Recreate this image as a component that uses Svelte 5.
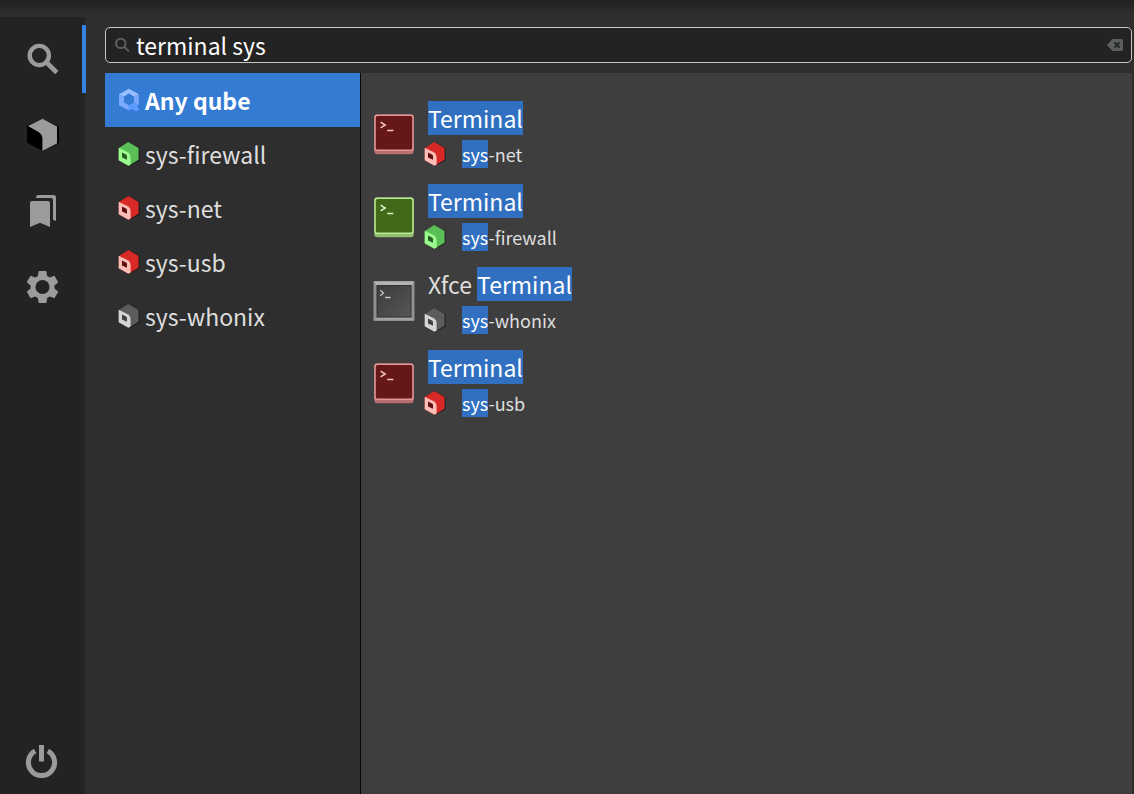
<script>
  let query = $state('terminal sys');
  let activeTab = $state('search');
  let selected = $state('Any qube');

  const tabs = [
    { id: 'search', label: 'Search' },
    { id: 'qubes', label: 'Applications' },
    { id: 'favorites', label: 'Favorites' },
    { id: 'settings', label: 'Settings' }
  ];

  const qubes = [
    { name: 'Any qube', color: 'any' },
    { name: 'sys-firewall', color: 'green' },
    { name: 'sys-net', color: 'red' },
    { name: 'sys-usb', color: 'red' },
    { name: 'sys-whonix', color: 'gray' }
  ];

  const results = [
    { prefix: '', match: 'Terminal', rest: '-net', color: 'red' },
    { prefix: '', match: 'Terminal', rest: '-firewall', color: 'green' },
    { prefix: 'Xfce ', match: 'Terminal', rest: '-whonix', color: 'gray' },
    { prefix: '', match: 'Terminal', rest: '-usb', color: 'red' }
  ];

  const cube = {
    red: { body: '#d72a27', face: '#fbbdb6', hole: '#5e0f10' },
    green: { body: '#59bf56', face: '#9bfb8e', hole: '#275c25' },
    gray: { body: '#5c5c5c', face: '#d6d6d6', hole: '#414141' }
  };

  const term = {
    red: { edge: '#e39797', lip: '#b86f70', fill: '#661818', ink: '#f4c4c2' },
    green: { edge: '#b9e894', lip: '#94bd73', fill: '#42681a', ink: '#dcf5c6' }
  };
</script>

{#snippet cubeIcon(color)}
  <svg class="cube" viewBox="0 0 22 24" aria-hidden="true">
    <path d="M11 .2 21.6 6v12.4L11 24 .2 18V6z" fill="#000" opacity=".5" />
    <path d="M10.3 0 20.6 6v11.8L10.5 23.8.8 18.2V6z" fill={cube[color].body} />
    <path d="M.6 5.8 9.8 10.2Q12.6 11.8 12.6 14.8V22.6L10.5 23.8.6 18.2z" fill={cube[color].face} />
    <path d="M4 10.6 8 12.4Q9 13 9 14V17.8L4 15.4z" fill={cube[color].hole} />
  </svg>
{/snippet}

{#snippet terminalIcon(color)}
  <svg class="app-icon" viewBox="0 0 42 42" aria-hidden="true">
    {#if color === 'gray'}
      <defs>
        <linearGradient id="gray-screen" x1="0" y1="0" x2="1" y2="1">
          <stop offset="0" stop-color="#3c3c3c" />
          <stop offset="1" stop-color="#565656" />
        </linearGradient>
      </defs>
      <rect x="0.5" y="1" width="41" height="40" rx="1" fill="#909090" />
      <path d="M1 1.5H41L39 5H3z" fill="#b4b4b4" />
      <path d="M1 40 3 38H39L41 40z" fill="#a2a2a2" />
      <rect x="3.5" y="5" width="35" height="32.5" fill="#333" />
      <rect x="4.5" y="6" width="33" height="30.5" fill="url(#gray-screen)" />
      <path d="M7.2 10.2 10.6 13 7.2 15.8M12 17.5H17.5" fill="none" stroke="#c4c4c4" stroke-width="1.3" />
    {:else}
      <rect x="1.3" y="0.6" width="39.4" height="39.7" rx="3" fill={term[color].lip} />
      <rect x="1.3" y="0.6" width="39.4" height="36.3" rx="2.5" fill={term[color].edge} />
      <rect x="2.8" y="2" width="36.4" height="33.4" rx="1.5" fill={term[color].fill} />
      <path d="M7.6 8.2 12.2 11 7.6 13.8M14.2 16.6H20.4" fill="none" stroke={term[color].ink} stroke-width="1.5" />
    {/if}
  </svg>
{/snippet}

<div class="menu">
  <div class="titlebar"></div>
  <nav class="sidebar" aria-label="Pages">
    {#each tabs as tab}
      <button
        class="tab"
        class:active={activeTab === tab.id}
        aria-label={tab.label}
        onclick={() => (activeTab = tab.id)}
      >
        <svg class="tab-icon" viewBox="0 0 35 36" aria-hidden="true">
          {#if tab.id === 'search'}
            <circle cx="14.3" cy="14.5" r="9.6" fill="none" stroke="#9b9b9b" stroke-width="4.4" />
            <path d="M20.8 20.6 31.8 31.6" stroke="#9b9b9b" stroke-width="4.8" />
          {:else if tab.id === 'qubes'}
            <path d="M17.8 1.8 33.8 9.5V26.5L18 34.2 2 25.8V8.8z" fill="#000" />
            <path d="M17.6 1.8 32 9.4V26.6L17.4 34V20.5Q17 17.6 14 15.2L3 9z" fill="#9b9b9b" />
          {:else if tab.id === 'favorites'}
            <path d="M7 8H23Q25 8 25 10V34L15 29.7 5 34V10Q5 8 7 8z" fill="#9b9b9b" />
            <path d="M11 4.4Q11 2 13.4 2H28.5Q31 2 31 4.5V28L28 26.8V7Q28 5 26 5H11z" fill="#9b9b9b" />
          {:else}
            <g transform="translate(-1.7 -1.2) scale(1.6)">
              <path
                fill="#9b9b9b"
                d="M19.43 12.98c.04-.32.07-.64.07-.98s-.03-.66-.07-.98l2.11-1.65c.19-.15.24-.42.12-.64l-2-3.46c-.12-.22-.39-.3-.61-.22l-2.49 1c-.52-.4-1.08-.73-1.69-.98l-.38-2.65C14.46 2.18 14.25 2 14 2h-4c-.25 0-.46.18-.49.42l-.38 2.65c-.61.25-1.17.59-1.69.98l-2.49-1c-.23-.09-.49 0-.61.22l-2 3.46c-.13.22-.07.49.12.64l2.11 1.65c-.04.32-.07.65-.07.98s.03.66.07.98l-2.11 1.65c-.19.15-.24.42-.12.64l2 3.46c.12.22.39.3.61.22l2.49-1c.52.4 1.08.73 1.69.98l.38 2.65c.03.24.24.42.49.42h4c.25 0 .46-.18.49-.42l.38-2.65c.61-.25 1.17-.59 1.69-.98l2.49 1c.23.09.49 0 .61-.22l2-3.46c.12-.22.07-.49-.12-.64l-2.11-1.65z"
              />
              <circle cx="12" cy="12" r="4.4" fill="#232323" />
            </g>
          {/if}
        </svg>
      </button>
    {/each}
    <button class="power" aria-label="Power">
      <svg class="tab-icon" viewBox="0 0 35 36" aria-hidden="true">
        <path d="M10.2 7A13.1 13.1 0 1 0 22.8 7" fill="none" stroke="#9b9b9b" stroke-width="5" />
        <path d="M16.5 1V17.5" stroke="#9b9b9b" stroke-width="5" />
      </svg>
    </button>
  </nav>

  <main class="page">
    <div class="search">
      <svg class="search-icon" viewBox="0 0 16 16" aria-hidden="true">
        <circle cx="5.8" cy="6.4" r="4.7" fill="none" stroke="#5b605f" stroke-width="2" />
        <path d="M9.2 9.8 14 14.4" stroke="#5b605f" stroke-width="2" />
      </svg>
      <input type="text" aria-label="Search" bind:value={query} />
      <button class="clear" aria-label="Clear" onclick={() => (query = '')}>
        <svg viewBox="0 0 16 12" aria-hidden="true">
          <path d="M0 6 5.5 0H14.5Q16 0 16 1.5V10.5Q16 12 14.5 12H5.5z" fill="#5b605f" />
          <path d="M7.4 3.4 12.6 8.6M12.6 3.4 7.4 8.6" stroke="#232323" stroke-width="2" />
        </svg>
      </button>
    </div>

    <div class="panes">
      <ul class="qubes">
        {#each qubes as qube}
          <li>
            <button
              class="qube"
              class:selected={selected === qube.name}
              onclick={() => (selected = qube.name)}
            >
              {#if qube.color === 'any'}
                <svg class="cube" viewBox="0 0 22 24" aria-hidden="true">
                  <path d="M1 6.2 10.8 .8 20.8 6.2 15.9 8.6 10.8 5.6 5.9 8.6z" fill="#99bfff" />
                  <path d="M1 6.2 5.9 8.6V14.2L10.8 17.2V22.6L1 17.2z" fill="#7aaaff" />
                  <path d="M20.8 6.2 15.9 8.6V14.2L20.8 17.2z" fill="#7aaaff" />
                  <path d="M10.8 17.2 15.9 14.2 20.8 17.2 18.8 18.8 21.6 21.2 18 23.6 14.5 21 10.8 22.6z" fill="#5e9bff" />
                </svg>
              {:else}
                {@render cubeIcon(qube.color)}
              {/if}
              <span>{qube.name}</span>
            </button>
          </li>
        {/each}
      </ul>

      <ul class="results">
        {#each results as result}
          <li>
            <button class="result">
              {@render terminalIcon(result.color)}
              <span class="details">
                <span class="name">{result.prefix}<mark>{result.match}</mark></span>
                <span class="origin">
                  {@render cubeIcon(result.color)}
                  <span><mark>sys</mark>{result.rest}</span>
                </span>
              </span>
            </button>
          </li>
        {/each}
      </ul>
    </div>
  </main>
</div>

<style>
  :global(body) {
    margin: 0;
    background: #2e2e2e;
  }

  .menu {
    display: grid;
    grid-template-columns: 85px 1fr;
    grid-template-rows: 17px 1fr;
    box-sizing: border-box;
    min-height: 100vh;
    background: #2e2e2e;
    color: #dedede;
    font-family: 'Noto Sans CJK SC', 'Noto Sans', sans-serif;
    font-size: 23px;
    line-height: 34px;
  }

  button {
    display: flex;
    align-items: center;
    margin: 0;
    padding: 0;
    border: 0;
    background: none;
    color: inherit;
    font: inherit;
    text-align: left;
  }

  ul {
    margin: 0;
    padding: 0;
    list-style: none;
  }

  svg {
    display: block;
    flex: none;
  }

  .titlebar {
    grid-column: 1 / -1;
    background: linear-gradient(#212121, #2e2e2e 14px);
  }

  .sidebar {
    display: flex;
    flex-direction: column;
    gap: 8px;
    padding: 8px 0 14px;
    background: #232323;
  }

  .tab {
    height: 68px;
    padding-left: 25px;
    margin-right: -1px;
    border-right: 4px solid transparent;
  }

  .tab.active {
    border-right-color: #3584e4;
  }

  .tab-icon {
    width: 35px;
    height: 36px;
  }

  .power {
    margin-top: auto;
    padding-left: 25px;
  }

  .page {
    display: flex;
    flex-direction: column;
    gap: 10px;
    padding: 10px 2px 0 20px;
  }

  .search {
    display: flex;
    align-items: center;
    box-sizing: border-box;
    height: 36px;
    padding: 0 8px 0 9px;
    border: 1px solid #cdc7c2;
    border-radius: 5px;
    background: #232323;
  }

  .search-icon {
    width: 16px;
    height: 16px;
  }

  input {
    flex: 1;
    min-width: 0;
    height: 34px;
    margin: 0;
    padding: 0 5px;
    border: 0;
    outline: 0;
    background: none;
    color: #fff;
    font: inherit;
  }

  .clear svg {
    width: 16px;
    height: 12px;
  }

  .panes {
    display: grid;
    grid-template-columns: 256px 1fr;
    flex: 1;
  }

  .qubes {
    border-right: 1px solid #060606;
  }

  .qube {
    gap: 5px;
    width: 100%;
    height: 54px;
    padding-left: 13px;
  }

  .qube.selected {
    background: #347bd4;
    color: #fff;
    font-weight: 700;
  }

  .cube {
    width: 22px;
    height: 24px;
  }

  .results {
    padding: 20px 12px;
    background: #3e3e3e;
  }

  .result {
    gap: 9px;
    width: 100%;
    height: 83px;
  }

  .app-icon {
    width: 42px;
    height: 42px;
  }

  .details {
    display: grid;
    gap: 5px;
  }

  .name {
    padding-left: 4px;
  }

  .origin {
    display: flex;
    align-items: center;
    gap: 16px;
    font-size: 18px;
    line-height: 28px;
  }

  mark {
    background: #3170c1;
    color: #fff;
  }

  .origin mark {
    padding: 1px 0;
  }
</style>
